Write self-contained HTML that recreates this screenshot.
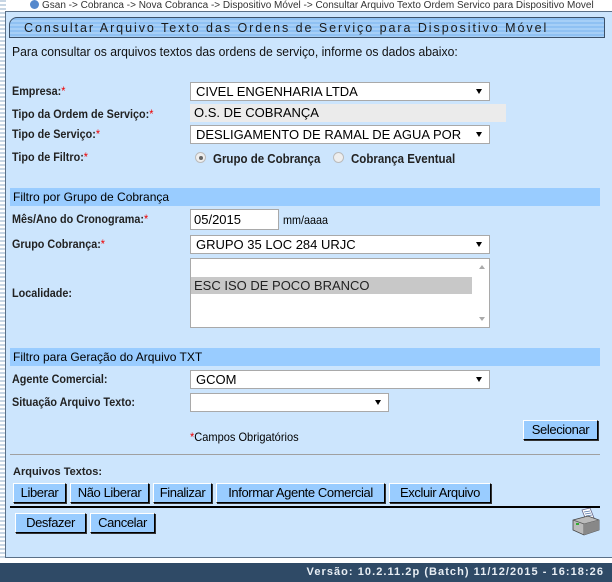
<!DOCTYPE html>
<html><head><meta charset="utf-8"><style>
*{margin:0;padding:0;box-sizing:border-box}
body{width:612px;height:582px;background:#fff;position:relative;overflow:hidden;font-family:"Liberation Sans",Arial,sans-serif;font-size:12px;color:#000}
.a{position:absolute;white-space:nowrap}
.lbl{position:absolute;font-size:12px;font-weight:bold;color:#222;transform:scaleX(.9);transform-origin:left}
.req{color:#e00;font-weight:normal}
.sel{position:absolute;background:#fff;border:1px solid #a9a9a9;font-size:13px;padding-left:5px;line-height:17px;color:#000}
.sel:after{content:"";position:absolute;right:7px;top:6px;border-left:3px solid transparent;border-right:3px solid transparent;border-top:5px solid #000}
.btn{position:absolute;background:#99ccff;border:1px solid #000;border-top-color:#fff;border-left-color:#fff;box-shadow:1px 1px 0 #333;font-size:13px;text-align:center;line-height:17px;height:20px;color:#000;letter-spacing:-0.4px}
.sec{position:absolute;left:10px;width:590px;height:18px;background:#99ccff;font-size:12px;line-height:18px;padding-left:3px}
</style></head><body>
<div class="a" style="left:0;top:0;width:6px;height:560px;background:repeating-linear-gradient(#c8d6e4 0 2px,#fff 2px 4px)"></div>
<div class="a" style="left:5px;top:11px;width:607px;height:547px;background:#cce5fd;border:1px solid #5a7088;border-right:none"></div>
<div class="a" style="left:30px;top:0;font-size:10px;color:#333;line-height:11px"><span style="display:inline-block;width:9px;height:9px;border-radius:50%;background:#5588cc;vertical-align:-1px;margin-right:3px"></span>Gsan -&gt; Cobranca -&gt; Nova Cobranca -&gt; Dispositivo Móvel -&gt; Consultar Arquivo Texto Ordem Servico para Dispositivo Movel</div>
<div class="a" style="left:9px;top:17px;width:596px;height:21px;border:1px solid #3b5068;border-radius:8px 2px 0 0;background:repeating-linear-gradient(#8fc1f3 0 2px,#a6cff7 2px 4px);font-size:12.5px;letter-spacing:1.95px;line-height:20px;padding-left:14px;color:#1a1a1a">Consultar Arquivo Texto das Ordens de Serviço para Dispositivo Móvel</div>
<div class="a" style="left:12px;top:45px;font-size:12.5px;color:#111;transform:scaleX(.975);transform-origin:left">Para consultar os arquivos textos das ordens de serviço, informe os dados abaixo:</div>

<div class="lbl" style="left:12px;top:84px">Empresa:<span class="req">*</span></div>
<div class="sel" style="left:190px;top:82px;width:300px;height:19px">CIVEL ENGENHARIA LTDA</div>
<div class="lbl" style="left:12px;top:107px">Tipo da Ordem de Serviço:<span class="req">*</span></div>
<div class="a" style="left:190px;top:104px;width:316px;height:18px;background:#ebebeb;font-size:13px;line-height:18px;padding-left:4px">O.S. DE COBRANÇA</div>
<div class="lbl" style="left:12px;top:127px">Tipo de Serviço:<span class="req">*</span></div>
<div class="sel" style="left:190px;top:125px;width:300px;height:19px;overflow:hidden">DESLIGAMENTO DE RAMAL DE AGUA POR</div>
<div class="lbl" style="left:12px;top:150px">Tipo de Filtro:<span class="req">*</span></div>
<div class="a" style="left:195px;top:152px;width:11px;height:11px;border-radius:50%;background:#eee;border:1px solid #bbb"><div style="position:absolute;left:2.5px;top:2.5px;width:4px;height:4px;border-radius:50%;background:#666"></div></div>
<div class="a" style="left:213px;top:152px;font-size:12.5px;font-weight:bold;color:#222;transform:scaleX(.92);transform-origin:left">Grupo de Cobrança</div>
<div class="a" style="left:333px;top:152px;width:11px;height:11px;border-radius:50%;background:#eee;border:1px solid #bbb"></div>
<div class="a" style="left:351px;top:152px;font-size:12.5px;font-weight:bold;color:#222;transform:scaleX(.92);transform-origin:left">Cobrança Eventual</div>

<div class="sec" style="top:188px">Filtro por Grupo de Cobrança</div>
<div class="lbl" style="left:12px;top:212px">Mês/Ano do Cronograma:<span class="req">*</span></div>
<div class="a" style="left:190px;top:209px;width:89px;height:21px;background:#fff;border:1px solid #a9a9a9;font-size:13px;line-height:19px;padding-left:3px">05/2015</div>
<div class="a" style="left:283px;top:213px;font-size:12px;transform:scaleX(.9);transform-origin:left">mm/aaaa</div>
<div class="lbl" style="left:12px;top:237px">Grupo Cobrança:<span class="req">*</span></div>
<div class="sel" style="left:190px;top:235px;width:300px;height:19px">GRUPO 35 LOC 284 URJC</div>
<div class="a" style="left:190px;top:258px;width:300px;height:70px;background:#fff;border:1px solid #a9a9a9">
<div style="position:absolute;left:0;top:18px;width:281px;height:17px;background:#c8c8c8;font-size:13px;line-height:17px;padding-left:3px;color:#222">ESC ISO DE POCO BRANCO</div>
<div style="position:absolute;right:4px;top:6px;border-left:3px solid transparent;border-right:3px solid transparent;border-bottom:4px solid #aaa"></div>
<div style="position:absolute;right:4px;bottom:6px;border-left:3px solid transparent;border-right:3px solid transparent;border-top:4px solid #aaa"></div>
</div>
<div class="lbl" style="left:12px;top:286px">Localidade:</div>

<div class="sec" style="top:348px">Filtro para Geração do Arquivo TXT</div>
<div class="lbl" style="left:12px;top:372px">Agente Comercial:</div>
<div class="sel" style="left:190px;top:370px;width:300px;height:19px">GCOM</div>
<div class="lbl" style="left:12px;top:395px">Situação Arquivo Texto:</div>
<div class="sel" style="left:190px;top:393px;width:199px;height:19px"></div>

<div class="a" style="left:190px;top:430px;font-size:12px;transform:scaleX(.92);transform-origin:left"><span class="req">*</span>Campos Obrigatórios</div>
<div class="btn" style="left:523px;top:420px;width:75px">Selecionar</div>
<div class="a" style="left:10px;top:454px;width:590px;height:1px;background:#a0a0a0"></div>
<div class="a" style="left:13px;top:466px;font-size:11px;font-weight:bold;color:#222">Arquivos Textos:</div>
<div class="btn" style="left:13px;top:483px;width:53px">Liberar</div>
<div class="btn" style="left:70px;top:483px;width:79px">Não Liberar</div>
<div class="btn" style="left:153px;top:483px;width:59px">Finalizar</div>
<div class="btn" style="left:216px;top:483px;width:169px">Informar Agente Comercial</div>
<div class="btn" style="left:389px;top:483px;width:102px">Excluir Arquivo</div>
<div class="a" style="left:10px;top:506px;width:590px;height:2px;background:#000"></div>
<div class="btn" style="left:15px;top:513px;width:71px">Desfazer</div>
<div class="btn" style="left:90px;top:513px;width:65px">Cancelar</div>
<svg class="a" style="left:570px;top:508px" width="32" height="30" viewBox="0 0 32 30">
<path d="M12 2 L20 0 L24 10 L16 12 Z" fill="#fff" stroke="#668" stroke-width=".8"/>
<path d="M14 4 L20 3 M15 6 L21 5 M16 8 L22 7" stroke="#57a" stroke-width=".8"/>
<path d="M3 12 L18 8 L29 12 L29 22 L14 27 L3 22 Z" fill="#bbb" stroke="#444" stroke-width=".8"/>
<path d="M3 12 L14 16 L29 12 M14 16 L14 27" stroke="#555" fill="none" stroke-width=".8"/>
<path d="M14 16 L29 12 L29 22 L14 27 Z" fill="#888"/>
<rect x="6" y="15" width="3" height="2" fill="#3a3"/>
</svg>

<div class="a" style="left:0;top:563px;width:612px;height:19px;background:#2f4a66"></div>
<div class="a" style="right:8px;top:566px;font-size:11px;font-weight:bold;color:#e8eef4;letter-spacing:1.05px">Versão: 10.2.11.2p (Batch) 11/12/2015 - 16:18:26</div>
</body></html>
